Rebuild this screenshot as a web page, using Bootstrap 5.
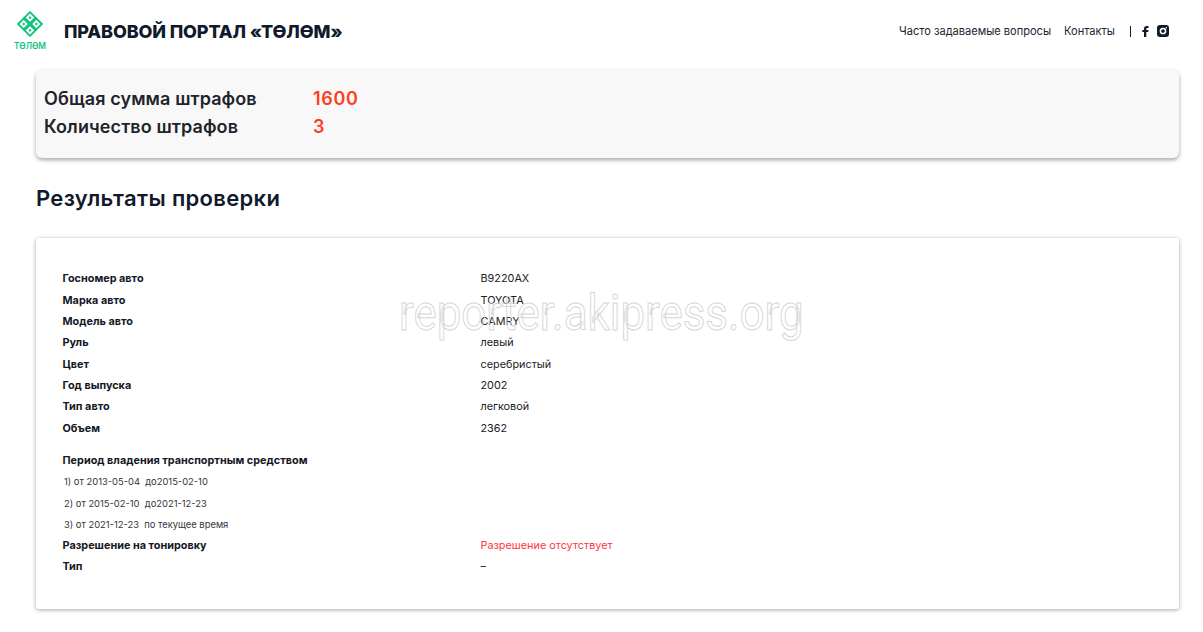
<!DOCTYPE html>
<html lang="ru">
<head>
  <meta charset="UTF-8" />
  <meta name="viewport" content="width=device-width, initial-scale=1.0"/>
  <title>Правовой портал «Төлөм»</title>
  <link href="https://cdn.jsdelivr.net/npm/bootstrap@5.3.0/dist/css/bootstrap.min.css" rel="stylesheet" />
  <style>
    html, body { height: 632px; overflow: hidden; }
    body { background: #fff; font-family: Inter, Roboto, sans-serif; color: #111a2c; }

    .top-bar { height: 62px; padding: 0 34px 0 13.5px; }
    .logo-box { width: 33px; margin-right: 17.5px; }
    .logo-box svg { display: block; margin: 0 auto; }
    .logo-word { font-size: 8.4px; font-weight: 600; line-height: 9px; color: #10c47f; text-align: center; margin-top: 5px; }
    .site-title { font-size: 18px; font-weight: 800; margin: 1px 0 0; color: #111a2c; letter-spacing: -.14px; }
    .top-link { font-size: 11.05px; color: #1c2433; text-decoration: none; margin-right: 13px; }
    .top-link-last { margin-right: 15px; }
    .top-sep { width: 1px; height: 11px; margin-right: 11px; background: #111a2c; }

    .page-wrap { padding: 8px 24px 0 36px; }
    .sum-box { height: 88px; padding: 15px 8px; background: #f8f8f8; border-radius: 6px; box-shadow: 0 2px 4px rgba(0,0,0,.35); }
    .sum-row { font-size: 18px; font-weight: 600; line-height: 28px; color: #20232a; }
    .sum-label { width: 269px; letter-spacing: .1px; }
    .sum-val { color: #ff3d22; letter-spacing: .7px; }

    .result-title { font-size: 22px; font-weight: 600; line-height: 28px; margin: 26px 0 26px; color: #111a2c; letter-spacing: .32px; }

    .info-box { position: relative; height: 371px; padding: 30.3px 26.5px; background: #fff; border-radius: 3px; box-shadow: 0 1px 4px rgba(0,0,0,.35); }
    .info-row { font-size: 10.85px; line-height: 21.35px; color: #1c2028; }
    .info-label { width: 418px; font-weight: 700; color: #14181f; }
    .period-head { margin-top: 11px; }
    .period-item { font-size: 9.4px; line-height: 21.2px; padding-left: 1.5px; color: #33363c; }
    .no-permit { color: #ff3340; }

    .wm-text { position: absolute; left: 363px; top: 45px; font-family: Roboto, sans-serif; font-size: 50px; font-weight: 400; line-height: 60px; color: transparent; -webkit-text-stroke: 1px #d6d6d6; pointer-events: none; white-space: nowrap; transform: scaleX(.877); transform-origin: left center; }
  </style>
</head>
<body>
  <header class="top-bar d-flex align-items-center justify-content-between">
    <div class="d-flex align-items-center">
      <div class="logo-box">
        <svg width="26" height="26" viewBox="0 0 33 33" fill="none" stroke="#10c47f" stroke-width="2.400">
          <path d="M16.500 1.500l7 7-7 7-7-7z"/>
          <path d="M8.500 9.500l7 7-7 7-7-7z"/>
          <path d="M24.500 9.500l7 7-7 7-7-7z"/>
          <path d="M16.500 17.500l7 7-7 7-7-7z"/>
          <path d="M16.500 6.500l2 2-2 2-2-2zM8.500 14.500l2 2-2 2-2-2zM24.500 14.500l2 2-2 2-2-2zM16.500 22.500l2 2-2 2-2-2z" fill="#10c47f" stroke="none"/>
        </svg>
        <div class="logo-word">ТӨЛӨМ</div>
      </div>
      <h1 class="site-title">ПРАВОВОЙ ПОРТАЛ «ТӨЛӨМ»</h1>
    </div>
    <div class="d-flex align-items-center">
      <a class="top-link" href="#">Часто задаваемые вопросы</a>
      <a class="top-link top-link-last" href="#">Контакты</a>
      <span class="top-sep"></span>
      <svg class="me-2" width="7" height="11" viewBox="0 0 7 11"><path fill="#111a2c" d="M2 11V6H.3V4H2V2.600C2 .9 3 0 4.500 0H6.500v2H5.200c-.7 0-.9.3-.9.9V4h2.200l-.3 2H4.300v5z"/></svg>
      <svg width="12" height="12" viewBox="0 0 12 12"><rect width="12" height="12" rx="3" fill="#111a2c"/><circle cx="6" cy="6" r="2.600" fill="none" stroke="#fff" stroke-width="1.500"/><circle cx="9.300" cy="2.700" r=".8" fill="#fff"/></svg>
    </div>
  </header>

  <main class="page-wrap">
    <section class="sum-box">
      <div class="sum-row d-flex"><span class="sum-label">Общая сумма штрафов</span><span class="sum-val">1600</span></div>
      <div class="sum-row d-flex"><span class="sum-label">Количество штрафов</span><span class="sum-val">3</span></div>
    </section>

    <h2 class="result-title">Результаты проверки</h2>

    <section class="info-box">
      <div class="info-row d-flex"><span class="info-label">Госномер авто</span><span>B9220AX</span></div>
      <div class="info-row d-flex"><span class="info-label">Марка авто</span><span>TOYOTA</span></div>
      <div class="info-row d-flex"><span class="info-label">Модель авто</span><span>CAMRY</span></div>
      <div class="info-row d-flex"><span class="info-label">Руль</span><span>левый</span></div>
      <div class="info-row d-flex"><span class="info-label">Цвет</span><span>серебристый</span></div>
      <div class="info-row d-flex"><span class="info-label">Год выпуска</span><span>2002</span></div>
      <div class="info-row d-flex"><span class="info-label">Тип авто</span><span>легковой</span></div>
      <div class="info-row d-flex"><span class="info-label">Объем</span><span>2362</span></div>
      <div class="info-row period-head d-flex"><span class="info-label text-nowrap">Период владения транспортным средством</span></div>
      <div class="period-item">1) от 2013-05-04&nbsp; до2015-02-10</div>
      <div class="period-item">2) от 2015-02-10&nbsp; до2021-12-23</div>
      <div class="period-item">3) от 2021-12-23&nbsp; по текущее время</div>
      <div class="info-row d-flex"><span class="info-label">Разрешение на тонировку</span><span class="no-permit">Разрешение отсутствует</span></div>
      <div class="info-row d-flex"><span class="info-label">Тип</span><span>–</span></div>
      <div class="wm-text">reporter.akipress.org</div>
    </section>
  </main>

  <script src="https://cdn.jsdelivr.net/npm/bootstrap@5.3.0/dist/js/bootstrap.bundle.min.js"></script>
</body>
</html>
